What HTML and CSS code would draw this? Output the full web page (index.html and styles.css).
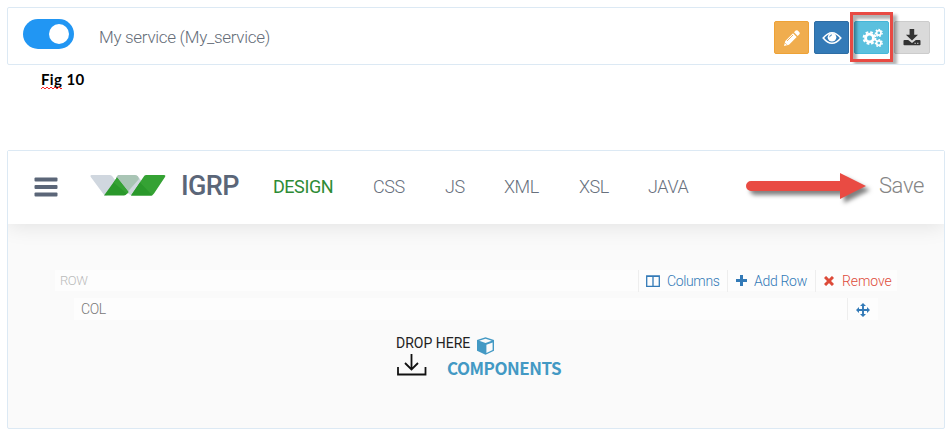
FILE: index.html
```html
<!DOCTYPE html>
<html lang="en">
<head>
<meta charset="utf-8">
<title>IGRP</title>
<link rel="stylesheet" href="styles.css">
</head>
<body>
<section class="service">
  <span class="toggle"><span class="knob"></span></span>
  <span class="service-name">My service (My_service)</span>
  <div class="actions">
    <button class="btn edit"><svg width="18" height="18" viewBox="0 0 18 18"><path fill="#fff" d="M1 17l1.300-5L10 4.300 13.700 8 6 15.700zM11 3.300l1.700-1.700q1-.9 2 0l1.700 1.700q.9 1 0 2L14.700 7z"/><path d="M4 12l6-6M2.300 14.200l1.500 1.500" stroke="#f0ad4e" stroke-width=".9"/></svg></button>
    <button class="btn view"><svg width="20" height="14" viewBox="0 0 20 14"><path d="M1.200 7Q10-3.600 18.800 7 10 17.600 1.200 7z" fill="none" stroke="#fff" stroke-width="1.600"/><circle cx="10" cy="6.200" r="4.300" fill="#fff"/><path d="M7.700 6.200Q7.700 3.900 10 3.900" fill="none" stroke="#337ab7" stroke-width=".9"/></svg></button>
    <button class="btn gears"><svg width="22" height="20" viewBox="0 0 22 20"><g fill="none" stroke="#fff"><circle cx="7.500" cy="10" r="3.900" stroke-width="2.800"/><circle cx="7.500" cy="10" r="5.900" stroke-width="2" stroke-dasharray="2.700 1.934"/><circle cx="16.800" cy="4.900" r="2.200" stroke-width="1.700"/><circle cx="16.800" cy="4.900" r="3.400" stroke-width="1.300" stroke-dasharray="1.700 1.352"/><circle cx="16.800" cy="15.100" r="2.200" stroke-width="1.700"/><circle cx="16.800" cy="15.100" r="3.400" stroke-width="1.300" stroke-dasharray="1.700 1.352"/></g></svg></button>
    <button class="btn download"><svg width="18" height="17" viewBox="0 0 18 17"><path fill="#333" d="M6.600 0h4.600v5.700h3.800L9 11.600 2.900 5.700h3.700zM1.400 11h3.800L9 14l3.800-3h3.800q.9 0 .9.900v3.500q0 .8-.9.800H1.400q-.9 0-.9-.8v-3.500q0-.9.900-.9z"/><path d="M11.500 14.300h1.300m1.300 0h1.300" stroke="#ddd" stroke-width="1"/></svg></button>
    <span class="highlight"></span>
  </div>
</section>
<p class="caption"><span class="misspelled">Fig<svg width="23" height="4" viewBox="0 0 23 4"><path d="M0 3l2-2 2 2 2-2 2 2 2-2 2 2 2-2 2 2 2-2 2 2 1-1" fill="none" stroke="#f22" stroke-width="1"/></svg></span> 10</p>
<section class="designer">
  <header class="topbar">
    <svg class="menu" width="24" height="20" viewBox="0 0 24 20"><g fill="#5b6678"><rect x=".5" y=".5" width="23" height="4" rx="1"/><rect x=".5" y="8" width="23" height="4" rx="1"/><rect x=".5" y="15.500" width="23" height="4" rx="1"/></g></svg>
    <svg class="logo" width="76" height="21" viewBox="0 0 76 21"><path fill="#d0d7df" d="M1.500 0H20q1.500 0 2.500 1.500l4 5.500L17 20.500h-2.500L.6 1.800Q0 0 1.500 0z"/><path fill="#d0d7df" d="M28 0h17q2 0 3 1.500l4 5-11 14-4-3z"/><path fill="#a9c5b5" d="M28 0h17q2 0 3 1.500l1 2.500-11 12.500-12-14z"/><path fill="#2a982b" d="M27 2.500L38.500 17l-1.500 1.700q-1.200 1.800-3 1.800H14z"/><path fill="#35a234" d="M27 2.500L38.500 17l-1.500 1.700L23.500 7.500z"/><path fill="#35a234" d="M56 0h18q2 0 1 2L64 18.500q-1.300 2-3 2H41L53.500 2q1-2 2.500-2z"/><path fill="#2a982b" d="M50 7.500l12.500 13H41z"/></svg>
    <span class="brand">IGRP</span>
    <nav class="tabs">
      <a class="tab active">DESIGN</a><a class="tab css">CSS</a><a class="tab js">JS</a><a class="tab xml">XML</a><a class="tab xsl">XSL</a><a class="tab java">JAVA</a>
    </nav>
    <svg class="arrow" width="126" height="36" viewBox="0 0 126 36"><path d="M6 12h89V4l26 13-26 13v-8H6a5 5 0 0 1 0-10z" fill="#e94b43"/></svg>
    <span class="save">Save</span>
  </header>
  <main class="canvas">
    <div class="row-bar">
      <span class="row-label">ROW</span>
      <span class="tool columns"><svg width="14" height="12" viewBox="0 0 14 12"><path d="M.7 1h12.600v10.300H.7zM7 1v10M.7 1.400h12.600" fill="none" stroke="#337ab7" stroke-width="1.300"/></svg><span>Columns</span></span>
      <span class="tool add"><svg width="11" height="11" viewBox="0 0 11 11"><path d="M5.500 0v11M0 5.500h11" stroke="#337ab7" stroke-width="3"/></svg><span>Add Row</span></span>
      <span class="tool remove"><svg width="10" height="10" viewBox="0 0 10 10"><path d="M1 1l8 8M9 1L1 9" stroke="#dd4b39" stroke-width="3"/></svg><span>Remove</span></span>
    </div>
    <div class="col-bar">
      <span class="col-label">COL</span>
      <span class="move"><svg width="14" height="14" viewBox="0 0 14 14"><path d="M7 2v10M2 7h10" stroke="#337ab7" stroke-width="1.900"/><path d="M7 0l3 3H4zM7 14l3-3H4zM0 7l3-3v6zM14 7l-3-3v6z" fill="#337ab7"/></svg></span>
    </div>
    <div class="drop">
      <div class="drop-line"><span class="drop-here">DROP HERE</span><svg class="cube" width="19" height="18" viewBox="0 0 19 18"><path fill="#4399c4" d="M9.500.2L18 3v10.800l-8.500 4-8.500-4V3z"/><path fill="#fafafa" d="M9.500 1.700l6.300 2.100-6.300 2.300-6.300-2.300zM10.400 7.700l6.200-2.300v7.500l-6.200 3z"/></svg></div>
      <div class="drop-line second"><svg width="31" height="22" viewBox="0 0 31 22"><path d="M15.500 0v15M9 9l6.500 6.500L22 9M2 13v7.500h27.500V13" fill="none" stroke="#111" stroke-width="1.800"/></svg><span class="components">COMPONENTS</span></div>
    </div>
  </main>
</section>
</body>
</html>
```
FILE: styles.css
```css
* { box-sizing: border-box; }
body { margin: 0; padding: 7px 6px 0 7px; height: 434px; overflow: hidden; background: #fff; font-family: Roboto, sans-serif; font-weight: 300; }
svg { display: block; flex: none; }
.service { height: 58px; border: 1px solid #dce9f4; border-radius: 2px; display: flex; align-items: center; padding: 0 14px 0 15px; }
.toggle { width: 51px; height: 30px; border-radius: 15px; background: #2196f3; margin-top: -4px; padding: 5px; display: flex; justify-content: flex-end; }
.knob { width: 20px; height: 20px; border-radius: 50%; background: #fff; }
.service-name { margin-left: 25px; margin-top: 2px; font-size: 17px; line-height: 20px; letter-spacing: -.3px; color: #656d78; }
.actions { margin-left: auto; margin-top: 3px; display: flex; gap: 5px; position: relative; }
.btn { width: 35px; height: 33px; padding: 0; border: 1px solid; border-radius: 2px; display: flex; align-items: center; justify-content: center; }
.edit { background: #f0ad4e; border-color: #eea236; }
.view { background: #337ab7; border-color: #2e6da4; }
.gears { background: #5bc0de; border-color: #46b8da; }
.gears svg { margin-left: 2px; }
.download { background: #dadada; border-color: #ccc; width: 36px; }
.highlight { position: absolute; left: 76px; top: -9px; width: 43px; height: 50px; border: 3px solid #e84a43; box-shadow: 4px 3px 3px rgba(0,0,0,.3), inset 4px 4px 3px rgba(0,0,0,.3); clip-path: inset(0 -10px -2px 0); }
.caption { margin: 5px 0 0 34px; height: 19px; font-family: Lato, sans-serif; font-size: 15px; line-height: 19px; font-weight: 700; letter-spacing: .4px; color: #000; }
.misspelled { position: relative; }
.misspelled svg { position: absolute; left: 0; bottom: -2px; }
.designer { margin-top: 61px; height: 279px; border: 1px solid #dce9f4; border-radius: 2px; background: #fafafa; }
.topbar { height: 73px; background: #fff; display: flex; align-items: center; padding: 0 20px 0 26px; box-shadow: 0 2px 20px rgba(0,0,0,.1); clip-path: inset(0 0 -40px 0); }
.menu { margin-top: -2px; }
.logo { margin-left: 32px; margin-top: -4px; }
.brand { margin-left: 15px; margin-top: -4px; font-size: 27px; line-height: 32px; font-weight: 500; letter-spacing: -.6px; color: #5b6678; }
.tabs { display: flex; margin-left: 34px; margin-top: -2px; }
.tab { font-size: 18px; line-height: 22px; color: #68707d; letter-spacing: -.35px; }
.active { color: #2d8b35; font-weight: 400; letter-spacing: -.4px; width: 100px; }
.css { width: 72px; }
.js { width: 59px; }
.xml { width: 75px; }
.xsl { width: 69px; }
.arrow { margin-left: auto; margin-top: -2px; filter: drop-shadow(4px 4px 2px rgba(0,0,0,.5)); }
.save { margin-left: 8px; margin-top: -4px; font-size: 22px; line-height: 26px; letter-spacing: -.35px; color: #858585; }
.canvas { padding: 46px 47px 0; display: flex; flex-direction: column; }
.row-bar { height: 21px; background: #fdfdfd; display: flex; align-items: center; }
.row-label { flex: 1; padding-left: 5px; font-size: 13px; letter-spacing: -.4px; color: #bbb; }
.tool { height: 22px; border-left: 1px solid #eee; display: flex; align-items: center; font-size: 14px; color: #337ab7; }
.columns { width: 89px; padding-left: 7px; gap: 7px; letter-spacing: -.35px; }
.add { width: 88px; padding-left: 8px; gap: 7px; letter-spacing: -.3px; }
.remove { width: 82px; padding-left: 8px; gap: 8px; letter-spacing: -.1px; color: #dd4b39; }
.col-bar { height: 22px; margin: 7px 19px 0; background: #fdfdfd; display: flex; align-items: center; }
.col-label { flex: 1; padding-left: 7px; font-size: 14px; letter-spacing: -.4px; color: #777; }
.move { width: 31px; height: 22px; border-left: 1px solid #eee; display: flex; align-items: center; padding-left: 8px; padding-top: 1px; }
.drop { margin: 14px 0 0 341px; }
.drop-line { display: flex; align-items: center; height: 21px; }
.drop-here { width: 80px; font-size: 14px; font-weight: 400; color: #222; margin-top: -3px; }
.cube { margin-top: 2px; }
.second { height: 26px; align-items: flex-start; margin-top: -1px; }
.components { margin-left: 20px; margin-top: 1px; font-family: "Noto Sans CJK SC", sans-serif; font-weight: 700; font-size: 17px; line-height: 26px; letter-spacing: -.5px; color: #4399c4; }
```
